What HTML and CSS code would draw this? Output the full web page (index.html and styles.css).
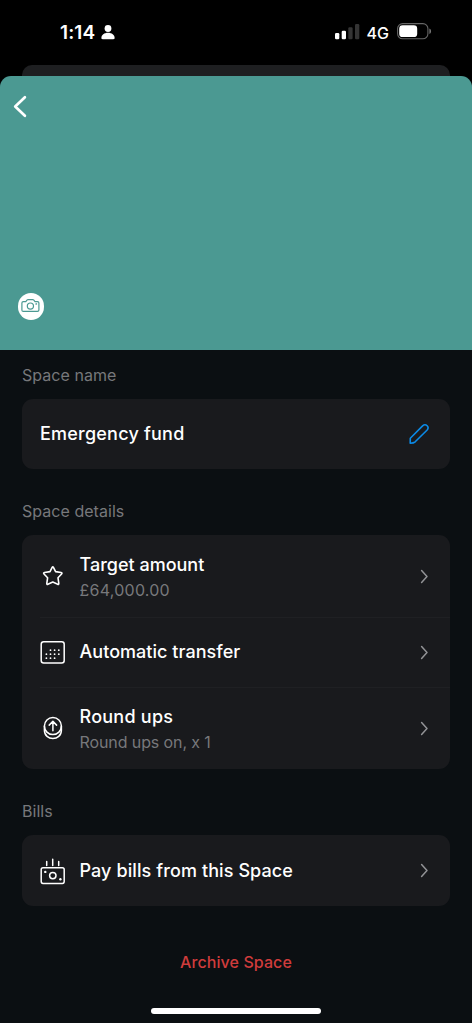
FILE: index.html
```html
<!DOCTYPE html>
<html lang="en">
<head>
<meta charset="utf-8">
<title>Space settings</title>
<link rel="stylesheet" href="styles.css">
</head>
<body>
<div class="screen">
  <header class="status">
    <span class="time">1:14</span>
    <svg class="person" width="14" height="15" viewBox="0 0 14 15" fill="#fff"><circle cx="7" cy="3.500" r="3.400"/><path d="M.4 13c0-3.100 2.800-5.200 6.600-5.200s6.600 2.100 6.600 5.200c0 .8-.5 1.200-1.200 1.200H1.600C.9 14.200.4 13.800.4 13z"/></svg>
    <svg class="signal" width="25" height="16" viewBox="0 0 25 16"><g fill="#fff"><rect x="0" y="9" width="4.300" height="6.200" rx="1.200"/><rect x="6.700" y="6.700" width="4.300" height="8.500" rx="1.200"/></g><g fill="#343434"><rect x="13.300" y="3.200" width="4.300" height="12" rx="1.200"/><rect x="20" y="0" width="4.300" height="15.200" rx="1.200"/></g></svg>
    <span class="network">4G</span>
    <svg class="battery" width="35" height="17" viewBox="0 0 35 17"><rect x=".6" y=".6" width="30.300" height="15.200" rx="5" fill="none" stroke="#666" stroke-width="1.100"/><rect x="2.200" y="2.300" width="18" height="11.800" rx="3.400" fill="#fff"/><path d="M32.400 5.500c2.200.8 2.200 4.700 0 5.500z" fill="#777"/></svg>
  </header>
  <div class="back-sheet"></div>
  <main class="sheet">
    <div class="hero">
      <svg class="back" width="14" height="23" viewBox="0 0 14 23" fill="none" stroke="#fff" stroke-width="2.700" stroke-linecap="round" stroke-linejoin="round"><path d="M11.900 2.200 2.200 11.500l9.700 9.200"/></svg>
      <div class="camera"><svg width="19" height="14" viewBox="0 0 19 14" fill="none" stroke="#4b9992" stroke-width="1.200" stroke-linejoin="round"><path d="M2.300 2.600h2.500L6.200.9Q6.500.6 7 .6h4.800q.5 0 .8.3L14 2.600h2.500q1.400 0 1.400 1.400v7q0 1.400-1.400 1.400H2.300Q.9 12.400.9 11V4q0-1.400 1.400-1.400z"/><circle cx="9.400" cy="7.100" r="3.100"/><circle cx="15.300" cy="4.900" r=".3"/></svg></div>
    </div>
    <h2 class="label">Space name</h2>
    <section class="card">
      <div class="row name-row">
        <span class="title fund">Emergency fund</span>
        <svg class="pencil" width="22" height="22" viewBox="0 0 22 22" fill="none" stroke="#0b8ae6" stroke-width="1.600" stroke-linejoin="round"><path d="M2.200 20.200 2.300 15.300 14.600 2.900c3.200-3 7.400 1.200 4.300 4.400L7.200 18.800q-1.400 1.300-5 1.400z"/></svg>
      </div>
    </section>
    <h2 class="label">Space details</h2>
    <section class="card">
      <div class="row tall">
        <svg class="icon" width="26" height="28" viewBox="0 0 26 28" fill="none" stroke="#fff" stroke-width="1.600" stroke-linejoin="round"><path d="M12.300 5.200Q12.800 4.200 13.300 5.200L15.600 9.600 21.100 10.500Q22.600 10.900 21.600 12L18 15.800 18.800 21.400Q18.900 22.800 17.700 22.200L12.800 20.100 7.900 22.200Q6.700 22.800 6.800 21.400L7.600 15.800 4 12Q3 10.900 4.500 10.500L10 9.600z"/></svg>
        <div class="copy"><span class="title target">Target amount</span><span class="sub amount">£64,000.00</span></div>
        <svg class="chev" width="9" height="15" viewBox="0 0 9 15"><path d="M1.600 1.600 7 7.500l-5.400 5.900"/></svg>
      </div>
      <div class="row divided">
        <svg class="icon" width="26" height="28" viewBox="0 0 26 28" fill="none" stroke="#fff"><rect x="1.200" y="3.700" width="23" height="21.200" rx="2.500" stroke-width="1.500"/><g fill="#fff" stroke="none"><circle cx="10.500" cy="12.200" r=".9"/><circle cx="14.600" cy="12.200" r=".9"/><circle cx="18.800" cy="12.200" r=".9"/><circle cx="6.400" cy="16.200" r=".9"/><circle cx="10.500" cy="16.200" r=".9"/><circle cx="14.600" cy="16.200" r=".9"/><circle cx="18.800" cy="16.200" r=".9"/><circle cx="6.400" cy="20.200" r=".9"/><circle cx="10.500" cy="20.200" r=".9"/><circle cx="14.600" cy="20.200" r=".9"/></g></svg>
        <div class="copy"><span class="title transfer">Automatic transfer</span></div>
        <svg class="chev" width="9" height="15" viewBox="0 0 9 15"><path d="M1.600 1.600 7 7.500l-5.400 5.900"/></svg>
      </div>
      <div class="row tall divided">
        <svg class="icon" width="26" height="28" viewBox="0 0 26 28" fill="none" stroke="#fff" stroke-width="1.500" stroke-linecap="round" stroke-linejoin="round"><circle cx="12.900" cy="12.100" r="8.500"/><path d="M4.400 12.200v4c0 11 17 11 17 0v-4M12.900 16.800V7.600M9.200 11.100l3.700-3.700 3.700 3.700"/></svg>
        <div class="copy"><span class="title">Round ups</span><span class="sub on">Round ups on, x 1</span></div>
        <svg class="chev" width="9" height="15" viewBox="0 0 9 15"><path d="M1.600 1.600 7 7.500l-5.400 5.900"/></svg>
      </div>
    </section>
    <h2 class="label">Bills</h2>
    <section class="card">
      <div class="row pay">
        <svg class="icon" width="26" height="28" viewBox="0 0 26 28" fill="none" stroke="#fff" stroke-width="1.500" stroke-linecap="round"><rect x="1.200" y="10.800" width="23" height="15.600" rx="1.800"/><circle cx="12.800" cy="18.600" r="3.200"/><path d="M6.700 4.400v4M12.700 2.200v6.200M18.700 4.400v4"/><g fill="#fff" stroke="none"><circle cx="5.300" cy="14.900" r="1.200"/><circle cx="20.400" cy="22.300" r="1.200"/></g></svg>
        <div class="copy"><span class="title bills">Pay bills from this Space</span></div>
        <svg class="chev" width="9" height="15" viewBox="0 0 9 15"><path d="M1.600 1.600 7 7.500l-5.400 5.900"/></svg>
      </div>
    </section>
    <div class="archive">Archive Space</div>
    <div class="home"></div>
  </main>
</div>
</body>
</html>
```
FILE: styles.css
```css
* { box-sizing: border-box; }
body { margin: 0; background: #000; font-family: Inter, sans-serif; color: #fff; }
svg { display: block; flex: none; }
.screen { height: 1023px; display: flex; flex-direction: column; overflow: hidden; background: #000; }
.status { height: 65px; flex: none; display: flex; align-items: center; padding: 0 40px 0 60px; }
.time { font-size: 19px; font-weight: 600; letter-spacing: .1px; }
.person { margin-left: 6px; }
.signal { margin-left: auto; margin-bottom: 1px; }
.network { font-size: 16px; font-weight: 500; margin: 0 8px 0 7px; }
.battery { margin-bottom: 2px; }
.back-sheet { height: 11px; flex: none; margin: 0 22px; background: #1e1f21; border-radius: 10px 10px 0 0; }
.sheet { flex: 1; display: flex; flex-direction: column; border-radius: 11px 11px 0 0; overflow: hidden; background: #0b0f12; }
.hero { height: 274px; flex: none; display: flex; flex-direction: column; justify-content: space-between; padding: 19px 13px 30.500px; background: #4b9992; }
.camera { width: 26.500px; height: 26.500px; margin-left: 4.500px; border-radius: 50%; background: #fff; display: flex; align-items: center; justify-content: center; }
.label { margin: 0; padding: 0 22px; height: 49px; line-height: 51px; font-size: 16px; font-weight: 400; color: #77787b; letter-spacing: .04px; }
.card { margin: 0 22px 17px; border-radius: 11px; background: #191a1d; }
.row { height: 70px; display: flex; align-items: center; padding-left: 17.500px; padding-right: 21px; position: relative; }
.tall { height: 82px; }
.pay { height: 71px; }
.divided::before { content: ""; position: absolute; left: 18px; right: 0; top: 0; height: 1px; background: #1f2023; }
.name-row { justify-content: space-between; padding-left: 18px; padding-right: 20px; }
.copy { flex: 1; margin-left: 14px; display: flex; flex-direction: column; }
.title { font-size: 18px; line-height: 26px; font-weight: 500; letter-spacing: .25px; white-space: nowrap; }
.fund { letter-spacing: .22px; }
.target { letter-spacing: 0; }
.transfer { letter-spacing: .04px; }
.bills { letter-spacing: .1px; }
.sub { font-size: 16px; line-height: 25px; color: #77787b; white-space: nowrap; }
.tall .copy { padding-top: 2px; }
.amount { letter-spacing: .25px; }
.on { letter-spacing: -.1px; }
.chev { fill: none; stroke: #929396; stroke-width: 1.500; stroke-linecap: round; stroke-linejoin: round; }
.archive { margin-top: 25px; height: 28px; line-height: 28px; text-align: center; font-size: 16px; font-weight: 500; letter-spacing: .08px; color: #d03c3c; }
.home { width: 170px; height: 6px; margin: auto auto 9px; border-radius: 3px; background: #fff; }
```
